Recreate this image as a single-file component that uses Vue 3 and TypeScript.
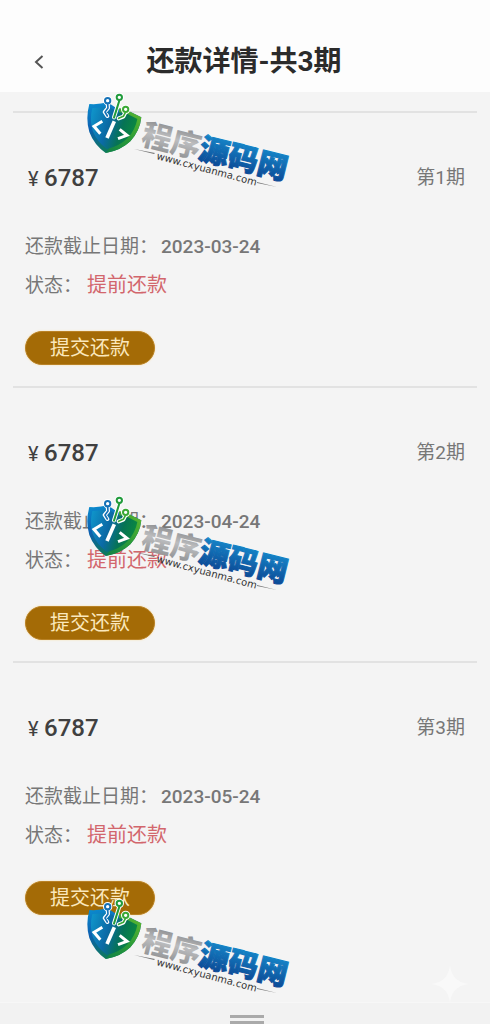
<script setup lang="ts">
interface Installment {
  period: number
  amount: number
  dueDate: string
  status: string
}

const installments: Installment[] = [
  { period: 1, amount: 6787, dueDate: '2023-03-24', status: '提前还款' },
  { period: 2, amount: 6787, dueDate: '2023-04-24', status: '提前还款' },
  { period: 3, amount: 6787, dueDate: '2023-05-24', status: '提前还款' },
]
</script>

<template>
  <div class="page">
    <header class="bar">
      <button class="back" type="button" aria-label="返回">
        <svg width="10" height="16" viewBox="0 0 10 16" fill="none">
          <path d="M8.5 2 2 8l6.500 6" stroke="#555" stroke-width="2" />
        </svg>
      </button>
      <h1>还款详情-共{{ installments.length }}期</h1>
    </header>

    <main class="list">
      <section v-for="item in installments" :key="item.period" class="item">
        <div class="top">
          <p class="amount"><span class="yen">¥</span>{{ item.amount }}</p>
          <p class="period">第{{ item.period }}期</p>
        </div>
        <dl>
          <div class="row">
            <dt class="due">还款截止日期：</dt>
            <dd class="date">{{ item.dueDate }}</dd>
          </div>
          <div class="row">
            <dt class="state">状态：</dt>
            <dd class="status">{{ item.status }}</dd>
          </div>
        </dl>
        <button class="submit" type="button">提交还款</button>
      </section>
    </main>

    <footer class="handle"><span></span><span></span></footer>

    <svg class="sparkle" viewBox="0 0 36 36" aria-hidden="true">
      <path d="M18 0C20 11 25 16 36 18C25 20 20 25 18 36C16 25 11 20 0 18C11 16 16 11 18 0Z" fill="#f9f9f9" />
    </svg>

    <svg class="defs" aria-hidden="true">
      <defs>
        <linearGradient id="blue" x1="0" y1="0" x2="0.3" y2="1">
          <stop offset="0" stop-color="#0b8fd0" />
          <stop offset="0.5" stop-color="#0c5fb0" />
          <stop offset="1" stop-color="#0e7a5a" />
        </linearGradient>
        <linearGradient id="green" x1="1" y1="0" x2="0" y2="1">
          <stop offset="0" stop-color="#62ba2e" />
          <stop offset="0.5" stop-color="#2c9c38" />
          <stop offset="1" stop-color="#0f8148" />
        </linearGradient>
        <linearGradient id="core" x1="0" y1="0.2" x2="1" y2="0.5">
          <stop offset="0" stop-color="#0f93c9" />
          <stop offset="0.4" stop-color="#0b6aa6" />
          <stop offset="0.7" stop-color="#067355" />
          <stop offset="1" stop-color="#0b8a3e" />
        </linearGradient>
        <linearGradient id="silver" x1="0" y1="0" x2="0" y2="1">
          <stop offset="0.1" stop-color="#808183" />
          <stop offset="0.5" stop-color="#bcbdbf" />
          <stop offset="1" stop-color="#858789" />
        </linearGradient>
        <linearGradient id="ocean" x1="0" y1="0" x2="0" y2="1">
          <stop offset="0.2" stop-color="#1585c8" />
          <stop offset="1" stop-color="#0a3e8c" />
        </linearGradient>
      </defs>
    </svg>

    <div class="marks">
      <svg v-for="n in 3" :key="n" class="mark" viewBox="0 0 220 100">
        <g transform="translate(0 -2) scale(0.3333)">
          <path d="M28 48Q58 50 83 43L112 62L140 66Q162 77 184 88Q180 128 151 160Q122 188 77 195Q42 170 28 132Q16 92 28 48Z" fill="url(#blue)" />
          <path d="M118 60L140 66Q162 77 184 88Q180 128 151 160Q122 188 77 195Q110 160 118 60Z" fill="url(#green)" />
          <path d="M37 60Q63 60 83 54L112 72L138 76L172 93Q166 126 143 150Q119 174 81 183Q50 160 38 128Q28 96 37 60Z" fill="url(#core)" />
          <g fill="none" stroke-linecap="round" stroke-linejoin="round">
            <g stroke="#fff" stroke-width="12">
              <path d="M83 47 84 60 74 72 82 84M118 38 102 88M136 74 130 86 116 91" />
              <circle cx="83" cy="38" r="8" />
              <circle cx="118" cy="28" r="8" />
              <circle cx="137" cy="64" r="8" />
            </g>
            <path d="M83 47 84 60 75 72 82 84" stroke="#1672b7" stroke-width="5" />
            <path d="M118 38 102 89" stroke="#219b3c" stroke-width="6" />
            <path d="M136 74 130 85 116 91" stroke="#3aa936" stroke-width="5" />
            <circle cx="83" cy="38" r="8" fill="#fff" stroke="#1672b7" stroke-width="6" />
            <circle cx="118" cy="28" r="8" fill="#fff" stroke="#219b3c" stroke-width="6" />
            <circle cx="137" cy="64" r="8" fill="#fff" stroke="#3aa936" stroke-width="6" />
          </g>
          <g fill="none" stroke="#fff" stroke-width="9">
            <path d="M67 100 42 115 61 137" />
            <path d="M103 100 81 150" stroke-width="11" />
            <path d="M119 124 141 142 114 152" />
          </g>
        </g>
        <g transform="translate(60 54) rotate(14)">
          <text class="brand silver" x="0" y="0">程序</text>
          <text class="brand ocean" x="59" y="0">源码网</text>
        </g>
        <g transform="translate(76 69) rotate(15)">
          <text class="site" x="0" y="0">www.cxyuanma.com</text>
        </g>
        <path d="M54 59 75 63 74 64ZM177 92 197 97 177 93Z" fill="#777" />
      </svg>
    </div>
  </div>
</template>

<style>
body {
  margin: 0;
}
</style>

<style scoped>
.page {
  position: relative;
  display: flex;
  flex-direction: column;
  min-height: 100vh;
  overflow: hidden;
  background: #f4f4f4;
  color: #777;
  font-family: Roboto, "Noto Sans CJK SC", sans-serif;
  font-size: 19px;
}

.bar {
  display: grid;
  grid-template-columns: 78px 1fr 80px;
  align-items: center;
  height: 60px;
  padding-top: 32px;
  background: #fdfdfd;
}

.back {
  display: flex;
  padding: 8px 0 8px 34px;
  border: 0;
  background: none;
}

.back svg {
  flex: none;
}

h1 {
  margin: 0;
  color: #2b2b2b;
  font-size: 28px;
  font-weight: 700;
  line-height: 40px;
  text-align: center;
  white-space: nowrap;
}

.list {
  flex: 1;
  padding: 19px 13px 0;
}

.item {
  padding: 47px 12px 21px;
  border-top: 2px solid #e2e2e2;
}

.top {
  display: flex;
  align-items: center;
  justify-content: space-between;
  height: 36px;
  margin-bottom: 31px;
}

p,
dl,
dd {
  margin: 0;
}

.amount {
  padding-left: 3px;
  color: #404040;
  font-size: 24px;
  font-weight: 500;
}

.yen {
  display: inline-block;
  width: 16px;
  font-size: 20px;
  font-weight: 400;
}

.period {
  line-height: 36px;
}

.row {
  display: flex;
  height: 39px;
  line-height: 39px;
  white-space: nowrap;
}

.due {
  width: 136px;
}

.state {
  width: 62px;
}

.date {
  font-weight: 500;
}

.status {
  color: #d2666c;
  font-size: 20px;
}

.submit {
  display: block;
  width: 130px;
  height: 34px;
  margin-top: 26px;
  padding: 1px 0 0;
  border: 1px solid #b98226;
  border-radius: 17px;
  background: #a46b06;
  color: #fbe8bd;
  font: inherit;
  font-size: 20px;
  line-height: 31px;
  box-shadow: 0 0 2px #f8dfa8;
}

.handle {
  display: flex;
  flex-direction: column;
  align-items: center;
  gap: 3px;
  padding: 12px 0 0 4px;
  border-top: 1px solid #f7f7f7;
  background: #f2f2f2;
}

.handle span {
  width: 34px;
  height: 3px;
  background: #aaa;
}

.sparkle {
  position: absolute;
  right: 22px;
  bottom: 22px;
  width: 36px;
}

.defs {
  position: absolute;
  width: 0;
  height: 0;
}

.marks {
  position: absolute;
  top: 90px;
  left: 80px;
  display: flex;
  flex-direction: column;
  gap: 303px;
  pointer-events: none;
}

.mark {
  display: block;
  width: 220px;
  height: 100px;
  overflow: visible;
}

.brand {
  font-family: "Noto Sans CJK SC", sans-serif;
  font-size: 30px;
  font-weight: 900;
}

.silver {
  fill: url(#silver);
}

.ocean {
  fill: url(#ocean);
  stroke: url(#ocean);
  stroke-width: 1px;
}

.site {
  font-family: "DejaVu Sans", sans-serif;
  font-size: 10px;
  fill: #333;
}
</style>
